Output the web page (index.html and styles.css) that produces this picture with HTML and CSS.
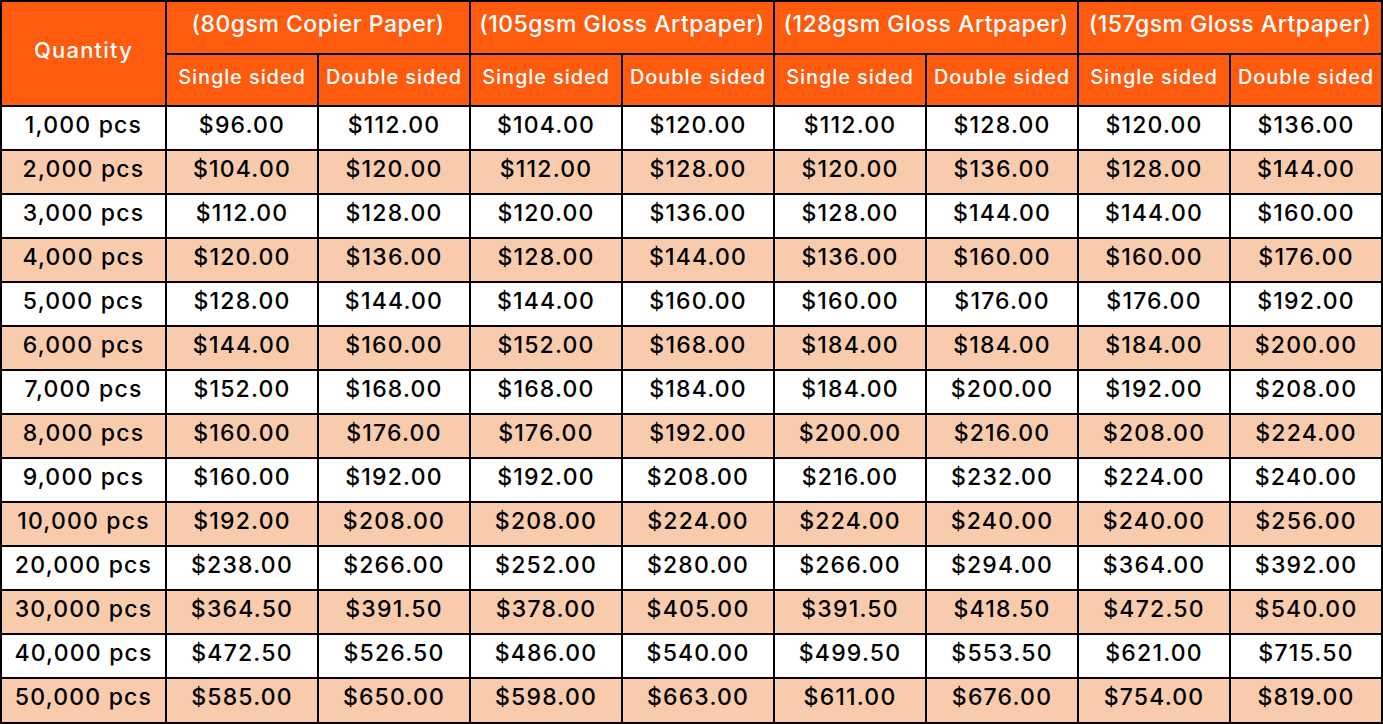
FILE: index.html
```html
<!DOCTYPE html>
<html lang="en">
<head>
<meta charset="utf-8">
<title>Flyer Printing Prices</title>
<link rel="stylesheet" href="styles.css">
</head>
<body>
<table class="price-table">
  <colgroup>
    <col class="col-qty">
    <col class="col-price"><col class="col-price"><col class="col-price"><col class="col-price">
    <col class="col-price"><col class="col-price"><col class="col-price"><col class="col-price">
  </colgroup>
  <thead>
    <tr class="head-top">
      <th rowspan="2" class="qty-head">Quantity</th>
      <th colspan="2">(80gsm Copier Paper)</th>
      <th colspan="2">(105gsm Gloss Artpaper)</th>
      <th colspan="2">(128gsm Gloss Artpaper)</th>
      <th colspan="2">(157gsm Gloss Artpaper)</th>
    </tr>
    <tr class="head-sub">
      <th>Single sided</th><th>Double sided</th>
      <th>Single sided</th><th>Double sided</th>
      <th>Single sided</th><th>Double sided</th>
      <th>Single sided</th><th>Double sided</th>
    </tr>
  </thead>
  <tbody>
    <tr><td>1,000 pcs</td><td>$96.00</td><td>$112.00</td><td>$104.00</td><td>$120.00</td><td>$112.00</td><td>$128.00</td><td>$120.00</td><td>$136.00</td></tr>
    <tr><td>2,000 pcs</td><td>$104.00</td><td>$120.00</td><td>$112.00</td><td>$128.00</td><td>$120.00</td><td>$136.00</td><td>$128.00</td><td>$144.00</td></tr>
    <tr><td>3,000 pcs</td><td>$112.00</td><td>$128.00</td><td>$120.00</td><td>$136.00</td><td>$128.00</td><td>$144.00</td><td>$144.00</td><td>$160.00</td></tr>
    <tr><td>4,000 pcs</td><td>$120.00</td><td>$136.00</td><td>$128.00</td><td>$144.00</td><td>$136.00</td><td>$160.00</td><td>$160.00</td><td>$176.00</td></tr>
    <tr><td>5,000 pcs</td><td>$128.00</td><td>$144.00</td><td>$144.00</td><td>$160.00</td><td>$160.00</td><td>$176.00</td><td>$176.00</td><td>$192.00</td></tr>
    <tr><td>6,000 pcs</td><td>$144.00</td><td>$160.00</td><td>$152.00</td><td>$168.00</td><td>$184.00</td><td>$184.00</td><td>$184.00</td><td>$200.00</td></tr>
    <tr><td>7,000 pcs</td><td>$152.00</td><td>$168.00</td><td>$168.00</td><td>$184.00</td><td>$184.00</td><td>$200.00</td><td>$192.00</td><td>$208.00</td></tr>
    <tr><td>8,000 pcs</td><td>$160.00</td><td>$176.00</td><td>$176.00</td><td>$192.00</td><td>$200.00</td><td>$216.00</td><td>$208.00</td><td>$224.00</td></tr>
    <tr><td>9,000 pcs</td><td>$160.00</td><td>$192.00</td><td>$192.00</td><td>$208.00</td><td>$216.00</td><td>$232.00</td><td>$224.00</td><td>$240.00</td></tr>
    <tr><td>10,000 pcs</td><td>$192.00</td><td>$208.00</td><td>$208.00</td><td>$224.00</td><td>$224.00</td><td>$240.00</td><td>$240.00</td><td>$256.00</td></tr>
    <tr><td>20,000 pcs</td><td>$238.00</td><td>$266.00</td><td>$252.00</td><td>$280.00</td><td>$266.00</td><td>$294.00</td><td>$364.00</td><td>$392.00</td></tr>
    <tr><td>30,000 pcs</td><td>$364.50</td><td>$391.50</td><td>$378.00</td><td>$405.00</td><td>$391.50</td><td>$418.50</td><td>$472.50</td><td>$540.00</td></tr>
    <tr><td>40,000 pcs</td><td>$472.50</td><td>$526.50</td><td>$486.00</td><td>$540.00</td><td>$499.50</td><td>$553.50</td><td>$621.00</td><td>$715.50</td></tr>
    <tr class="last"><td>50,000 pcs</td><td>$585.00</td><td>$650.00</td><td>$598.00</td><td>$663.00</td><td>$611.00</td><td>$676.00</td><td>$754.00</td><td>$819.00</td></tr>
  </tbody>
</table>
</body>
</html>
```

FILE: styles.css
```css
html, body {
  margin: 0;
  padding: 0;
  background: #ffffff;
}

.price-table {
  border-collapse: collapse;
  table-layout: fixed;
  width: 1383px;
  border: 2px solid #000;
  font-family: "Inter", "Noto Sans", sans-serif;
  font-weight: 500;
  color: #000;
}

.col-qty { width: 165px; }
.col-price { width: 152px; }

.price-table th,
.price-table td {
  border: 2px solid #000;
  padding: 0 0 6px 0;
  line-height: 1;
  text-align: center;
  vertical-align: middle;
  white-space: nowrap;
  overflow: hidden;
}

.price-table th {
  background: #fe5b0e;
  color: #fff;
  font-weight: 500;
}

.head-top th {
  height: 45px;
  font-size: 23px;
  letter-spacing: 0.5px;
}

.head-top .qty-head {
  font-size: 22px;
  letter-spacing: 1.2px;
  padding-bottom: 7px;
}

.head-sub th {
  height: 44px;
  font-size: 20px;
  letter-spacing: 0.9px;
}

.price-table td {
  height: 36px;
  font-size: 23px;
  letter-spacing: 1.2px;
}

.price-table tbody tr:nth-child(even) td {
  background: #f8cbad;
}

.price-table tbody tr.last td {
  height: 37px;
}
```
